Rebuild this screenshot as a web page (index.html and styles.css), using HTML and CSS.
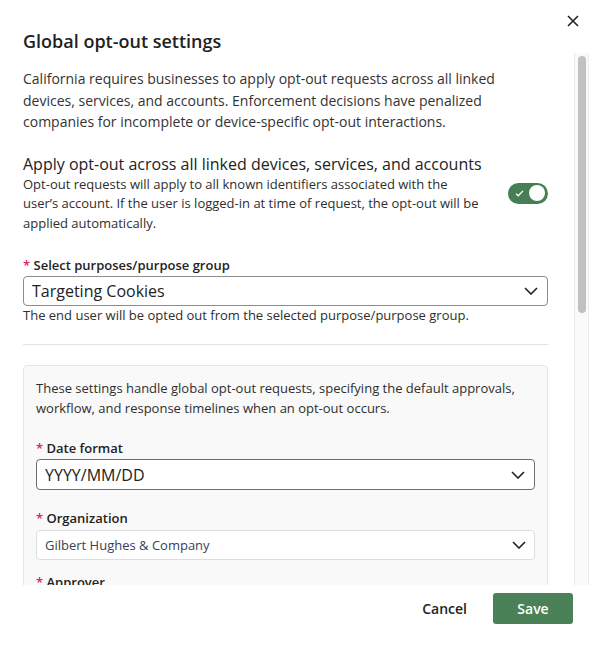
FILE: index.html
```html
<!DOCTYPE html>
<html lang="en">
<head>
<meta charset="utf-8">
<title>Global opt-out settings</title>
<link rel="stylesheet" href="styles.css">
</head>
<body>
<div class="dialog">
  <header class="header">
    <h1 class="title">Global opt-out settings</h1>
    <button class="close" aria-label="Close">
      <svg viewBox="0 0 12 12" width="12" height="12"><path d="M1 1 L11 11 M11 1 L1 11" stroke="#222" stroke-width="1.6" fill="none"/></svg>
    </button>
  </header>
  <div class="body">
    <main class="scroll">
      <p class="intro">California requires businesses to apply opt-out requests across all linked devices, services, and accounts. Enforcement decisions have penalized companies for incomplete or device-specific opt-out interactions.</p>

      <h2 class="section-title">Apply opt-out across all linked devices, services, and accounts</h2>
      <div class="toggle-row">
        <p class="toggle-desc">Opt-out requests will apply to all known identifiers associated with the user’s account. If the user is logged-in at time of request, the opt-out will be applied automatically.</p>
        <span class="toggle" role="switch" aria-checked="true">
          <svg class="toggle-check" viewBox="0 0 10 8" width="9" height="7"><path d="M1 4.2 L3.6 6.6 L9 1" stroke="#fff" stroke-width="1.5" fill="none"/></svg>
          <span class="knob"></span>
        </span>
      </div>

      <label class="label label-purpose"><span class="req">*</span> Select purposes/purpose group</label>
      <div class="select select-lg">
        <span>Targeting Cookies</span>
        <svg class="chev" viewBox="0 0 14 8" width="14" height="8"><path d="M1 1 L7 7 L13 1" stroke="#222" stroke-width="1.6" fill="none"/></svg>
      </div>
      <p class="help">The end user will be opted out from the selected purpose/purpose group.</p>

      <hr class="divider">

      <section class="panel">
        <p class="panel-desc">These settings handle global opt-out requests, specifying the default approvals, workflow, and response timelines when an opt-out occurs.</p>

        <label class="label label-date"><span class="req">*</span> Date format</label>
        <div class="select select-lg select-dark">
          <span>YYYY/MM/DD</span>
          <svg class="chev" viewBox="0 0 14 8" width="14" height="8"><path d="M1 1 L7 7 L13 1" stroke="#222" stroke-width="1.6" fill="none"/></svg>
        </div>

        <label class="label label-org"><span class="req">*</span> Organization</label>
        <div class="select select-sm">
          <span>Gilbert Hughes &amp; Company</span>
          <svg class="chev" viewBox="0 0 14 8" width="14" height="8"><path d="M1 1 L7 7 L13 1" stroke="#222" stroke-width="1.6" fill="none"/></svg>
        </div>

        <label class="label label-next"><span class="req">*</span> Approver</label>
        <div class="select select-sm">
          <span>Select approver</span>
          <svg class="chev" viewBox="0 0 14 8" width="14" height="8"><path d="M1 1 L7 7 L13 1" stroke="#222" stroke-width="1.6" fill="none"/></svg>
        </div>
      </section>
    </main>
    <div class="scrollbar" aria-hidden="true">
      <div class="thumb"></div>
    </div>
  </div>
  <footer class="footer">
    <button class="btn btn-cancel">Cancel</button>
    <button class="btn btn-save">Save</button>
  </footer>
</div>
</body>
</html>
```

FILE: styles.css
```css
* { box-sizing: border-box; }

html, body {
  margin: 0;
  padding: 0;
  background: #fff;
}

body {
  font-family: "Open Sans", "Liberation Sans", sans-serif;
  color: #2b2b2b;
}

.dialog {
  width: 596px;
  height: 647px;
  display: flex;
  flex-direction: column;
  background: #fff;
}

.header {
  display: flex;
  justify-content: space-between;
  align-items: flex-start;
  padding: 12px 15px 0 23px;
  height: 53px;
  flex: none;
}

.title {
  margin: 17px 0 0;
  font-size: 18px;
  line-height: 24px;
  font-weight: 600;
  color: #222;
}

.close {
  width: 16px;
  height: 16px;
  margin-top: 1px;
  padding: 0;
  border: 0;
  background: none;
  display: flex;
  align-items: center;
  justify-content: center;
  cursor: pointer;
}

.body {
  flex: 1;
  min-height: 0;
  display: flex;
  margin-right: 7px;
}

.scroll {
  flex: 1;
  min-width: 0;
  overflow: hidden;
  padding: 15px 26px 0 23px;
}

.scrollbar {
  flex: none;
  width: 15px;
  background: #fafafa;
  border-left: 1px solid #e8e8e8;
  border-right: 1px solid #ececec;
  padding: 3px 0 0 3px;
}

.thumb {
  width: 8px;
  height: 257px;
  border-radius: 4px;
  background: #c1c1c1;
}

.intro {
  margin: 0;
  font-size: 14px;
  line-height: 21.5px;
  color: #333;
}

.section-title {
  margin: 20px 0 0;
  font-size: 16px;
  line-height: 22px;
  font-weight: 400;
  color: #222;
}

.toggle-row {
  display: flex;
  justify-content: space-between;
  align-items: flex-start;
}

.toggle-desc {
  margin: 0;
  width: 460px;
  font-size: 13px;
  line-height: 19.5px;
  color: #2e2e2e;
}

.toggle {
  width: 40px;
  height: 21px;
  margin-top: 8px;
  border-radius: 11px;
  background: #467f55;
  display: flex;
  align-items: center;
  justify-content: space-between;
  padding: 0 3px 0 7px;
  flex: none;
}

.toggle-check {
  display: block;
}

.knob {
  width: 16px;
  height: 16px;
  border-radius: 50%;
  background: #fff;
}

.label {
  display: block;
  font-size: 13px;
  line-height: 18px;
  font-weight: 600;
  color: #222;
}

.req {
  color: #e0245e;
  font-weight: 600;
}

.label-purpose { margin-top: 23px; margin-bottom: 2px; }
.label-date { margin-top: 21px; margin-bottom: 2px; }
.label-org { margin-top: 19px; margin-bottom: 3px; }
.label-next { margin-top: 13px; margin-bottom: 3px; }

.select {
  display: flex;
  align-items: center;
  justify-content: space-between;
  background: #fff;
  border-radius: 4px;
}

.select-lg {
  height: 30px;
  border: 1px solid #8c8c8c;
  padding: 0 9px 0 8px;
  font-size: 16px;
  color: #222;
}

.select-dark {
  height: 31px;
  border-color: #6e6e6e;
}

.select-sm {
  height: 30px;
  border: 1px solid #dedede;
  padding: 0 8px 0 8px;
  font-size: 13px;
  color: #3a4157;
}

.chev { display: block; flex: none; }

.help {
  margin: 0;
  font-size: 13px;
  line-height: 18px;
  color: #2e2e2e;
}

.divider {
  margin: 20px 0 0;
  border: 0;
  border-top: 1px solid #e2e2e2;
  height: 0;
}

.panel {
  margin-top: 20px;
  background: #f9f9f9;
  border: 1px solid #e6e6e6;
  border-radius: 4px;
  padding: 12px 12px 40px;
}

.panel-desc {
  margin: 0;
  font-size: 13px;
  line-height: 20px;
  color: #2e2e2e;
}

.footer {
  flex: none;
  height: 62px;
  display: flex;
  justify-content: flex-end;
  align-items: flex-start;
  padding: 8px 23px 0 0;
  gap: 10px;
}

.btn {
  font-family: "Open Sans", "Liberation Sans", sans-serif;
  font-size: 14px;
  font-weight: 600;
  height: 31px;
  border-radius: 3px;
  cursor: pointer;
}

.btn-cancel {
  background: none;
  border: 0;
  color: #222;
  padding: 0 16px;
}

.btn-save {
  width: 80px;
  background: #4a8157;
  border: 0;
  color: #fff;
}
```
